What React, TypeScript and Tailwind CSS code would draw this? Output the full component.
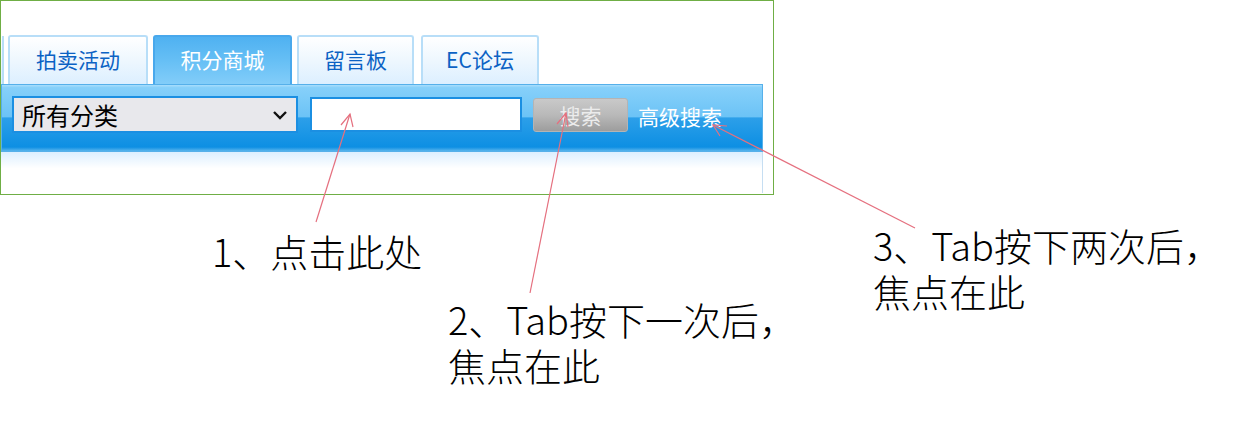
import React from "react";

const cjk = { fontFamily: '"Noto Sans CJK SC", "Noto Sans", sans-serif' };

function Tab({ label, active, w, ml }: { label: string; active?: boolean; w: string; ml: string }) {
  return (
    <div
      className={`${w} ${ml} h-[49px] flex items-center justify-center pb-[3px] rounded-t-[3px] border-2 border-b-0 ${
        active
          ? "border-[#48a8ec] bg-[linear-gradient(to_bottom,#4fb1f1_0%,#66bff5_50%,#82cdf9_100%)] text-white"
          : "border-[#b8def8] bg-[linear-gradient(to_bottom,#ffffff_0%,#eef7fe_50%,#dcefff_100%)] text-[#0b62c4]"
      } text-[21px] leading-none`}
      style={cjk}
    >
      {label}
    </div>
  );
}

function Note({ lines, pos }: { lines: string[]; pos: string }) {
  return (
    <div className={`absolute ${pos} flex flex-col text-[38px] font-light text-black whitespace-nowrap`}>
      {lines.map((l) => (
        <div key={l} className="h-[46px] leading-[46px]">
          {l}
        </div>
      ))}
    </div>
  );
}

export default function App() {
  return (
    <div className="relative w-[1256px] h-[430px] bg-white overflow-hidden" style={cjk}>
      {/* framed screenshot */}
      <div className="w-[774px] h-[195px] border-[1.5px] border-[#6fae45] bg-white">
        <div className="w-[762px] pt-[34px]">
          {/* tab row */}
          <div className="flex items-end h-[49px]">
            <div className="w-[3px] h-[48px] bg-[linear-gradient(to_bottom,#ffffff,#dcefff)] border-r-2 border-[#b8def8]" />
            <Tab label="拍卖活动" w="w-[140px]" ml="ml-[4px]" />
            <Tab label="积分商城" active w="w-[139px]" ml="ml-[5px]" />
            <Tab label="留言板" w="w-[117px]" ml="ml-[5px]" />
            <Tab label="EC论坛" w="w-[118px]" ml="ml-[7px]" />
          </div>
          {/* blue search bar */}
          <div className="h-[68px] border border-[#56b0ea] bg-[linear-gradient(to_bottom,#a9defc_0%,#86d0fa_4%,#6cc3f6_48%,#2c9fe9_50%,#0d8fe3_94%,#58b4ec_100%)] flex items-start pt-[11px]">
            <div className="ml-[10px] w-[286px] h-[37px] border-2 border-[#1b8fe2] bg-[#e8e8ec] flex items-center justify-between pl-[8px] pr-[8px]">
              <span className="text-[24px] leading-none text-black">所有分类</span>
              <svg width="16" height="10" viewBox="0 0 16 10">
                <path d="M2 2 L8 8 L14 2" fill="none" stroke="#111" strokeWidth="2.4" />
              </svg>
            </div>
            <div className="ml-[12px] mt-[1px] w-[212px] h-[35px] border-2 border-[#1b8fe2] bg-white" />
            <div className="ml-[11px] mt-[2px] w-[95px] h-[34px] rounded-[3px] border border-[#b4b4b4] bg-[linear-gradient(to_bottom,#c9c9c9_0%,#b9b9b9_50%,#9d9d9d_100%)] flex items-center justify-center">
              <span className="text-[21px] leading-none text-[#ececec]">搜索</span>
            </div>
            <span className="ml-[10px] mt-[10px] text-[21px] leading-none text-white">高级搜索</span>
          </div>
          {/* panel below */}
          <div className="h-[41px] border-r border-[#c6def2] bg-[linear-gradient(to_bottom,#dcefff_0%,#ffffff_40%,#ffffff_100%)]" />
        </div>
      </div>

      {/* annotations */}
      <Note lines={["1、点击此处"]} pos="left-[212px] top-[228px]" />
      <Note lines={["2、Tab按下一次后，", "焦点在此"]} pos="left-[448px] top-[296px]" />
      <Note lines={["3、Tab按下两次后，", "焦点在此"]} pos="left-[873px] top-[222px]" />

      {/* arrows */}
      <svg className="absolute left-0 top-0 pointer-events-none" width="1256" height="430" viewBox="0 0 1256 430">
        <g stroke="#e5707f" strokeWidth="1.2" fill="none">
          <line x1="316" y1="222" x2="350" y2="114" />
          <path d="M341 125 L350 114 L353 127" />
          <line x1="530" y1="293" x2="566" y2="113" />
          <path d="M557 124 L566 113 L568 127" />
          <line x1="915" y1="228" x2="713" y2="125" />
          <path d="M720 136 L713 125 L727 126" />
        </g>
      </svg>
    </div>
  );
}
